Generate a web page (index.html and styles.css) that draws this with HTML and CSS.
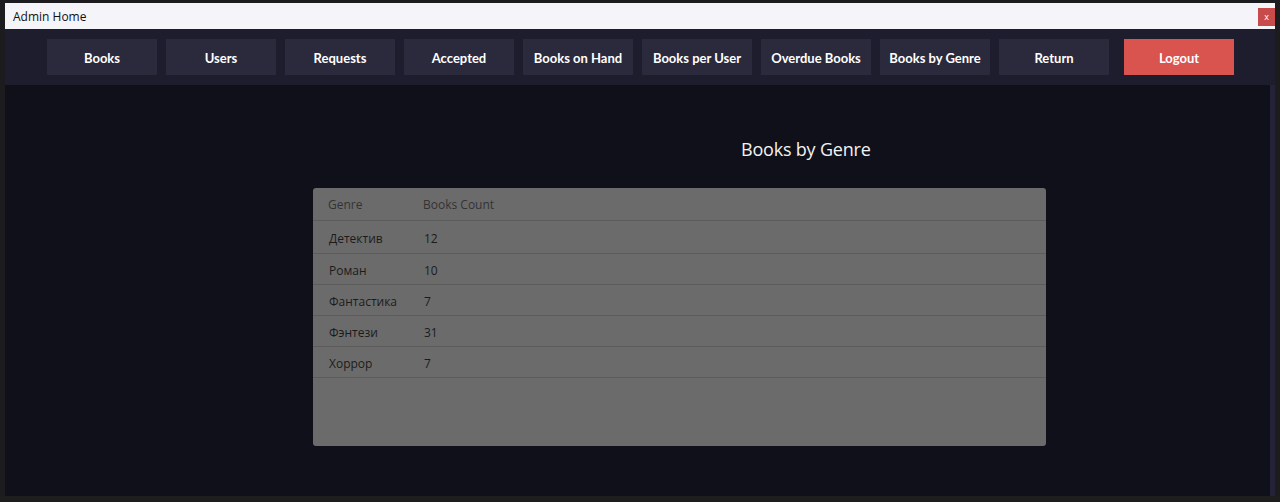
FILE: index.html
```html
<!DOCTYPE html>
<html>
<head>
<meta charset="utf-8">
<link rel="stylesheet" href="styles.css">
</head>
<body>
<div class="window">
  <div class="titlebar">
    <span class="title">Admin Home</span>
    <span class="close">x</span>
  </div>
  <nav class="nav">
    <button class="btn">Books</button>
    <button class="btn">Users</button>
    <button class="btn">Requests</button>
    <button class="btn">Accepted</button>
    <button class="btn">Books on Hand</button>
    <button class="btn">Books per User</button>
    <button class="btn">Overdue Books</button>
    <button class="btn">Books by Genre</button>
    <button class="btn">Return</button>
    <button class="btn logout">Logout</button>
  </nav>
  <main class="content">
    <h1 class="heading">Books by Genre</h1>
    <div class="grid">
      <div class="row head"><span class="c1">Genre</span><span class="c2">Books Count</span></div>
      <div class="row first"><span class="c1">Детектив</span><span class="c2">12</span></div>
      <div class="row"><span class="c1">Роман</span><span class="c2">10</span></div>
      <div class="row"><span class="c1">Фантастика</span><span class="c2">7</span></div>
      <div class="row"><span class="c1">Фэнтези</span><span class="c2">31</span></div>
      <div class="row"><span class="c1">Хоррор</span><span class="c2">7</span></div>
    </div>
  </main>
</div>
<div class="editor-strip"></div>
</body>
</html>
```

FILE: styles.css
```css
html, body {
  margin: 0;
  padding: 0;
}
body {
  background: #1c1c1e;
  width: 1280px;
  height: 502px;
  overflow: hidden;
  padding-top: 3px;
  box-sizing: border-box;
}
.window {
  margin-left: 5px;
  width: 1270px;
  height: 493px;
  display: flex;
  flex-direction: column;
  background: #0f1019;
}
.titlebar {
  height: 26px;
  background: #f4f4f9;
  display: flex;
  align-items: center;
  justify-content: space-between;
  padding-left: 8px;
  padding-right: 0;
  font-family: "Open Sans", "Noto Sans", sans-serif;
  font-size: 12px;
  color: #111;
}
.close {
  width: 17px;
  height: 18px;
  margin-top: 1px;
  background: #c84b4b;
  color: #fff;
  font-size: 9px;
  display: flex;
  align-items: center;
  justify-content: center;
  line-height: 1;
}
.nav {
  height: 56px;
  background: #1e1d2d;
  display: flex;
  align-items: center;
  justify-content: center;
  gap: 9px;
  padding-left: 1px;
  box-sizing: border-box;
}
.btn {
  width: 110px;
  height: 36px;
  border: none;
  background: #2b2a3c;
  color: #fff;
  font-family: "Lato", "Noto Sans", sans-serif;
  font-weight: 700;
  font-size: 13px;
  padding: 2px 0 0 0;
  margin: 0;
}
.logout {
  margin-left: 6px;
  background: #d9534f;
}
.content {
  flex: 1;
  display: flex;
  flex-direction: column;
  align-items: flex-start;
  border-right: 5px solid #232236;
}
.heading {
  margin: 52px 0 0 736px;
  font-family: "Open Sans", "Noto Sans", sans-serif;
  font-weight: 400;
  font-size: 18px;
  line-height: 24px;
  color: #f2f2f2;
  letter-spacing: -0.2px;
}
.grid {
  margin: 27px 0 0 308px;
  width: 733px;
  height: 258px;
  background: #6b6b6b;
  border-radius: 3px;
  font-family: "Open Sans", "Noto Sans", sans-serif;
  font-size: 12px;
  color: #1b1b1b;
}
.row {
  height: 30px;
  padding-top: 2px;
  box-sizing: border-box;
  height: 31px;
  display: flex;
  align-items: center;
  border-bottom: 1px solid #5c5c5c;
}
.row.head {
  height: 33px;
  padding-top: 1px;
  color: #333;
}
.row.first {
  height: 33px;
}
.c1 {
  width: 95px;
  padding-left: 16px;
}
.row.head .c1 {
  padding-left: 15px;
}
.editor-strip {
  height: 6px;
  background: #1e1e1e;
}
```
